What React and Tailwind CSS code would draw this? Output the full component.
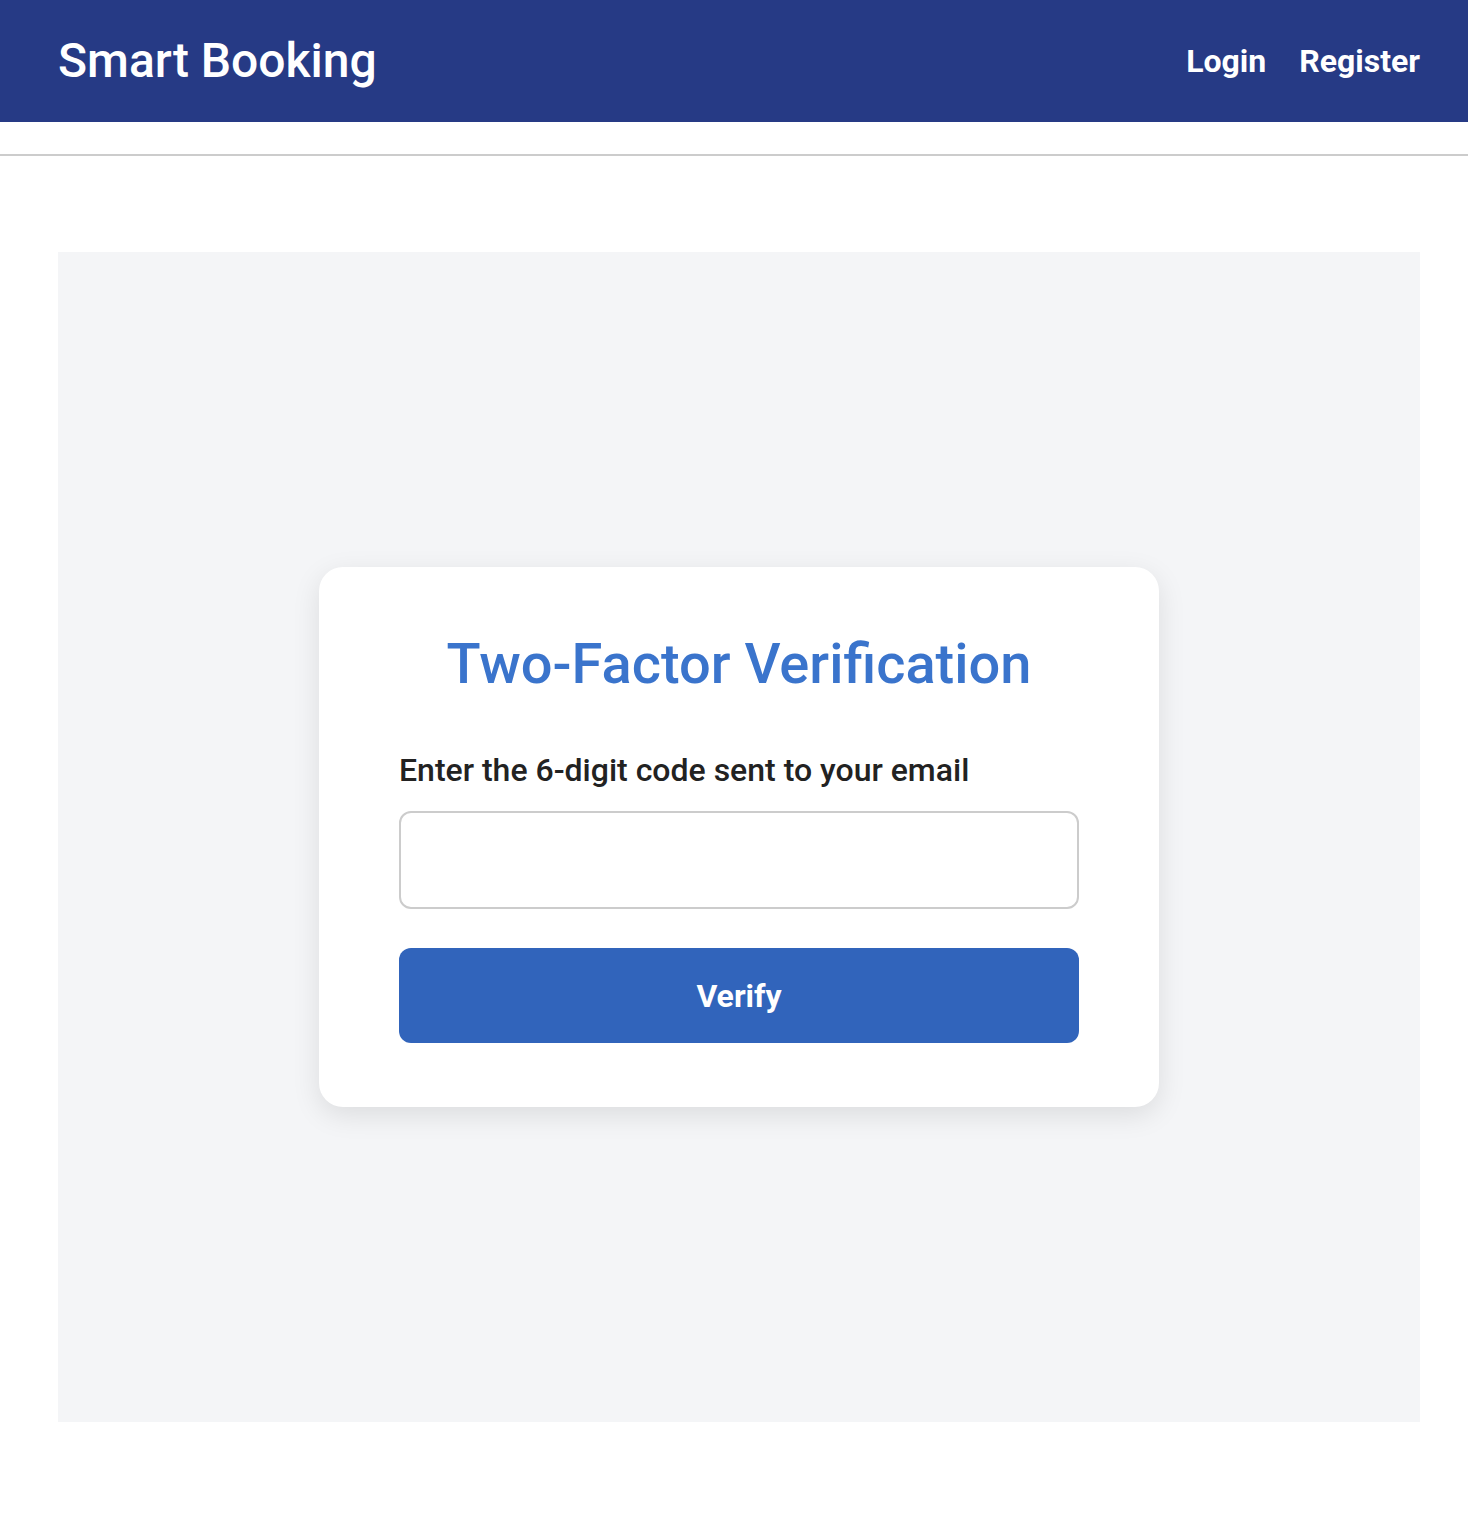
export default function App() {
  return (
    <div className="min-h-[1522px] bg-white" style={{ fontFamily: "Roboto, 'Liberation Sans', sans-serif" }}>
      <header className="h-[122px] bg-[#263a85] flex items-center justify-between pl-[58px] pr-[48px]">
        <div className="text-white text-[48px] font-medium leading-none">Smart Booking</div>
        <nav className="flex items-center gap-[33px] text-white text-[32px] font-bold leading-none">
          <a>Login</a>
          <a>Register</a>
        </nav>
      </header>
      <div className="mt-[32px] border-t-2 border-[#cccccc]" />
      <main className="pt-[96px] pl-[58px] pr-[48px]">
        <div className="h-[1170px] bg-[#f4f5f7] flex items-center justify-center">
          <div className="w-[840px] bg-white rounded-[24px] shadow-[0_8px_28px_rgba(0,0,0,0.10)] px-[80px] pt-[64px] pb-[64px]">
            <h1 className="text-center text-[#3a74cc] text-[56px] font-medium leading-[67px]">Two-Factor Verification</h1>
            <label className="block mt-[53px] text-[#222222] text-[32px] font-medium leading-[38px]">Enter the 6-digit code sent to your email</label>
            <input className="block mt-[22px] w-full h-[98px] border-2 border-[#cccccc] rounded-[12px] bg-white px-4 text-[32px] outline-none" />
            <button className="block mt-[39px] w-full h-[95px] bg-[#3164bb] rounded-[12px] text-white text-[32px] font-bold">Verify</button>
          </div>
        </div>
      </main>
    </div>
  );
}
